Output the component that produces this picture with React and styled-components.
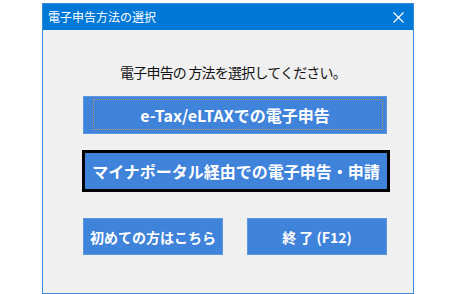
import React from "react";
import styled, { createGlobalStyle } from "styled-components";

const Global = createGlobalStyle`
  html, body { margin: 0; padding: 0; background: #ffffff; }
  body { font-family: "Noto Sans CJK JP", "Noto Sans", sans-serif; }
`;

const Window = styled.div`
  margin: 3px 0 0 42px;
  width: 370px;
  height: 289px;
  border: 1px solid #3a8ad8;
  display: flex;
  flex-direction: column;
  background: #f0f0f0;
`;

const TitleBar = styled.div`
  height: 26px;
  background: #0078d7;
  display: flex;
  align-items: center;
  justify-content: space-between;
  padding: 0 9px 0 5px;
  color: #ffffff;
  font-size: 12px;
  flex-shrink: 0;
`;

const Title = styled.span`
  line-height: 26px;
  margin-top: -1px;
`;

const Content = styled.div`
  flex: 1;
  padding: 32px 0 0 40px;
  display: flex;
  flex-direction: column;
  width: 304px;
`;

const Prompt = styled.div`
  font-size: 14px;
  line-height: 20px;
  letter-spacing: -0.8px;
  color: #111;
  text-align: center;
  margin-right: 4px;
`;

const Button = styled.div`
  position: relative;
  box-sizing: border-box;
  display: flex;
  align-items: center;
  justify-content: center;
  background: #3f83da;
  color: #ffffff;
  font-weight: bold;
  font-size: ${(p) => p.$size || 16}px;
  height: ${(p) => p.$h || 38}px;
  width: ${(p) => p.$w || 304}px;
  margin-top: ${(p) => p.$mt || 0}px;
  margin-left: ${(p) => p.$ml || 0}px;
  border: ${(p) => (p.$default ? "3px solid #000" : "1px solid #5c97e0")};
  white-space: pre;
  letter-spacing: ${(p) => p.$ls || 0}px;
  ${(p) =>
    p.$focus &&
    `&::after {
      content: "";
      position: absolute;
      top: 2px; left: 9px; right: 3px; bottom: 3px;
      border: 1px dotted #b8935c;
    }`}
`;

const Row = styled.div`
  display: flex;
  justify-content: space-between;
  margin-top: 26px;
`;

function CloseIcon() {
  return (
    <svg width="11" height="11" viewBox="0 0 11 11">
      <path d="M0.5 0.5 L10.5 10.5 M10.5 0.5 L0.5 10.5" stroke="#fff" strokeWidth="1.2" />
    </svg>
  );
}

export default function App() {
  return (
    <>
      <Global />
      <Window>
        <TitleBar>
          <Title>電子申告方法の選択</Title>
          <CloseIcon />
        </TitleBar>
        <Content>
          <Prompt>電子申告の 方法を選択してください。</Prompt>
          <Button $mt={14} $focus>e-Tax/eLTAXでの電子申告</Button>
          <Button $mt={16} $h={42} $w={308} $ml={-1} $default>
            マイナポータル経由での電子申告・申請
          </Button>
          <Row>
            <Button $w={140} $h={37} $size={14}>初めての方はこちら</Button>
            <Button $w={140} $h={37} $size={14}>{"終 了 (F12)"}</Button>
          </Row>
        </Content>
      </Window>
    </>
  );
}
